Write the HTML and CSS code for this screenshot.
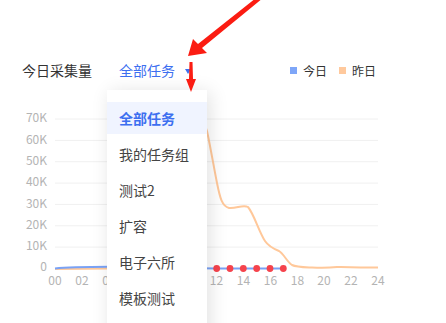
FILE: index.html
```html
<!DOCTYPE html>
<html lang="zh-CN">
<head>
<meta charset="UTF-8">
<meta name="viewport" content="width=device-width, initial-scale=1.0">
<title>今日采集量</title>
<link rel="stylesheet" href="styles.css">
</head>
<body>
  <div class="panel">
    <div class="panel-head">
      <span class="title">今日采集量</span>
      <span class="task-select">全部任务<i class="caret"></i></span>
      <div class="legend">
        <span class="legend-item"><i class="dot today"></i>今日</span>
        <span class="legend-item"><i class="dot yesterday"></i>昨日</span>
      </div>
    </div>

    <svg class="chart" width="446" height="200" viewBox="0 100 446 200">
      <g class="grid">
        <line x1="55" x2="378" y1="119" y2="119"/>
        <line x1="55" x2="378" y1="140.4" y2="140.4"/>
        <line x1="55" x2="378" y1="161.7" y2="161.7"/>
        <line x1="55" x2="378" y1="183.1" y2="183.1"/>
        <line x1="55" x2="378" y1="204.4" y2="204.4"/>
        <line x1="55" x2="378" y1="225.8" y2="225.8"/>
        <line x1="55" x2="378" y1="247.1" y2="247.1"/>
      </g>
      <g class="y-labels">
        <text x="47" y="119">70K</text>
        <text x="47" y="140.4">60K</text>
        <text x="47" y="161.7">50K</text>
        <text x="47" y="183.1">40K</text>
        <text x="47" y="204.4">30K</text>
        <text x="47" y="225.8">20K</text>
        <text x="47" y="247.1">10K</text>
        <text x="47" y="268">0</text>
      </g>
      <g class="x-labels">
        <text x="55" y="282">00</text>
        <text x="82" y="282">02</text>
        <text x="109" y="282">04</text>
        <text x="136" y="282">06</text>
        <text x="163" y="282">08</text>
        <text x="190" y="282">10</text>
        <text x="216.5" y="282">12</text>
        <text x="243.5" y="282">14</text>
        <text x="270.5" y="282">16</text>
        <text x="297.5" y="282">18</text>
        <text x="324" y="282">20</text>
        <text x="351" y="282">22</text>
        <text x="378" y="282">24</text>
      </g>
      <path class="line-yesterday" d="M55,269 C70,269 90,268.8 107,268.5 C130,268 150,200 170,120 C180,90 195,95 207,131 C211,150 214,168 217,183 C220,198 222,206 229,208 C236,209 243,204 248,207 C254,214 259,232 265,241 C269,247 274,249 279,251 C284,254 287,262 292,265 C296,267 300,267 312,267.5 C322,268 328,268 337,267 C346,266.5 356,268 378,267.5"/>
      <path class="line-today" d="M55,268.5 C65,267.5 80,267 110,266.8 C150,267 180,268 216.5,268.5 L284,268.5"/>
      <g class="points">
        <circle cx="216.7" cy="268.5" r="3.4"/>
        <circle cx="230" cy="268.5" r="3.4"/>
        <circle cx="243.3" cy="268.5" r="3.4"/>
        <circle cx="256.7" cy="268.5" r="3.4"/>
        <circle cx="270" cy="268.5" r="3.4"/>
        <circle cx="283.3" cy="268.5" r="3.4"/>
      </g>
    </svg>

    <ul class="dropdown">
      <li class="active">全部任务</li>
      <li>我的任务组</li>
      <li>测试2</li>
      <li>扩容</li>
      <li>电子六所</li>
      <li>模板测试</li>
    </ul>

    <!-- 标注箭头 -->
    <svg class="marks" width="446" height="323" viewBox="0 0 446 323">
      <polygon points="188,56 193,39 198,44 256,-2 263,-2 202,48 207,53"/>
      <polygon points="189.5,62 192.5,62 193,79 196,79 191,92 186,79 189,79"/>
    </svg>
  </div>
</body>
</html>
```

FILE: styles.css
```css
html, body {
  margin: 0;
  padding: 0;
  background: #fff;
  overflow: hidden;
}
body {
  font-family: 'Noto Sans CJK SC', 'Noto Sans', sans-serif;
  color: #333;
}
.panel {
  position: relative;
  width: 446px;
  height: 323px;
  padding-top: 60px;
  box-sizing: border-box;
  overflow: hidden;
}
.panel-head {
  display: flex;
  align-items: center;
  height: 20px;
  padding: 0 70px 0 22px;
}
.title {
  font-size: 14px;
  color: #333;
}
.task-select {
  display: flex;
  align-items: center;
  margin-left: 27px;
  font-size: 14px;
  color: #3d6ff0;
}
.caret {
  display: inline-block;
  width: 0;
  height: 0;
  margin-left: 10px;
  margin-top: 2px;
  border-left: 3.5px solid transparent;
  border-right: 3.5px solid transparent;
  border-top: 5px solid #3d6ff0;
}
.legend {
  display: flex;
  gap: 12px;
  margin-left: auto;
}
.legend-item {
  display: flex;
  align-items: center;
  font-size: 12px;
  color: #333;
}
.dot {
  display: inline-block;
  width: 7px;
  height: 7px;
  margin-right: 6px;
}
.dot.today {
  background: #7ea6f8;
}
.dot.yesterday {
  background: #ffc99d;
}
.chart {
  display: block;
  margin-top: 20px;
}
.grid line {
  stroke: #f0f0f0;
  stroke-width: 1;
}
.y-labels text, .x-labels text {
  font-size: 12px;
  fill: #b4b4b4;
  dominant-baseline: middle;
}
.y-labels text {
  text-anchor: end;
}
.x-labels text {
  text-anchor: middle;
}
.line-yesterday {
  fill: none;
  stroke: #ffc89a;
  stroke-width: 2;
}
.line-today {
  fill: none;
  stroke: #7aa2f5;
  stroke-width: 2;
}
.points circle {
  fill: #f5434c;
}
.dropdown {
  position: absolute;
  left: 107px;
  top: 90px;
  bottom: -20px;
  width: 100px;
  margin: 0;
  padding: 12px 0 0;
  list-style: none;
  background: #fff;
  box-shadow: 3px 2px 18px rgba(0,0,0,0.12);
}
.dropdown li {
  height: 32px;
  line-height: 32px;
  margin-bottom: 4px;
  padding-left: 12px;
  font-size: 14px;
  color: #444;
}
.dropdown li.active {
  background: #f0f4ff;
  color: #3d6ff0;
  font-weight: bold;
}
.marks {
  position: absolute;
  left: 0;
  top: 0;
  pointer-events: none;
}
.marks polygon {
  fill: #fb1c12;
}
```
